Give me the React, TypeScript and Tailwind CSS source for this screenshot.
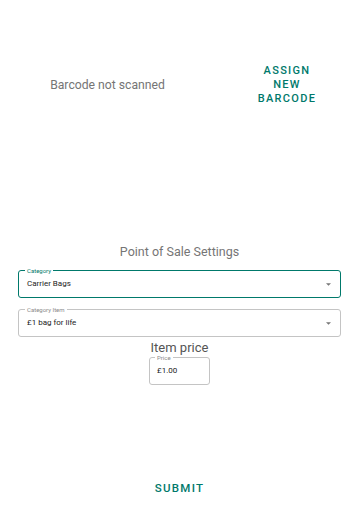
// Point of sale settings form — barcode row, category selects, price and submit.

const teal = 'text-[#00796b]';

function SelectField({ label, value, focused }: { label: string; value: string; focused?: boolean }) {
  return (
    <div
      className={`relative h-[28px] rounded-[3px] flex items-center pl-[8px] pr-[9px] ${
        focused ? 'border-[1.5px] border-[#00796b]' : 'border border-[#c4c4c4]'
      }`}
    >
      <span
        className={`absolute -top-[4px] left-[6px] bg-white px-[2px] text-[6px] leading-[7px] ${
          focused ? teal : 'text-[#8a8a8a]'
        }`}
      >
        {label}
      </span>
      <span className="flex-1 text-[8px] text-[#222]">{value}</span>
      <svg width="5" height="3" viewBox="0 0 6 3" className="fill-[#777]">
        <path d="M0 0 L6 0 L3 3 Z" />
      </svg>
    </div>
  );
}

export default function App() {
  return (
    <div className="w-[359px] h-[512px] bg-white font-['Roboto',sans-serif] flex flex-col">
      <div className="grid grid-cols-[215px_1fr] mt-[64px] h-[42px] items-center">
        <div className="text-center text-[12.2px] text-[#757575]">Barcode not scanned</div>
        <div className={`text-center text-[11px] leading-[14px] font-medium tracking-[1.3px] ${teal}`}>
          ASSIGN
          <br />
          NEW
          <br />
          BARCODE
        </div>
      </div>

      <div className="mt-[138px] text-center text-[12.5px] leading-[16px] text-[#757575]">Point of Sale Settings</div>

      <div className="mx-[18px] mt-[10px] flex flex-col gap-[11px]">
        <SelectField label="Category" value="Carrier Bags" focused />
        <SelectField label="Category Item" value="£1 bag for life" />
      </div>

      <div className="mt-[3px] text-center text-[13px] leading-[16px] text-[#555]">Item price</div>
      <div className="mx-auto mt-[1px] relative w-[61px] h-[28px] border border-[#c4c4c4] rounded-[3px] flex items-center pl-[7px]">
        <span className="absolute -top-[4px] left-[5px] bg-white px-[2px] text-[6px] leading-[7px] text-[#8a8a8a]">
          Price
        </span>
        <span className="text-[8px] text-[#222]">£1.00</span>
      </div>

      <div className="mt-auto mb-[13px] text-center">
        <span className={`text-[11.5px] font-medium tracking-[1.3px] ${teal}`}>SUBMIT</span>
      </div>
    </div>
  );
}
